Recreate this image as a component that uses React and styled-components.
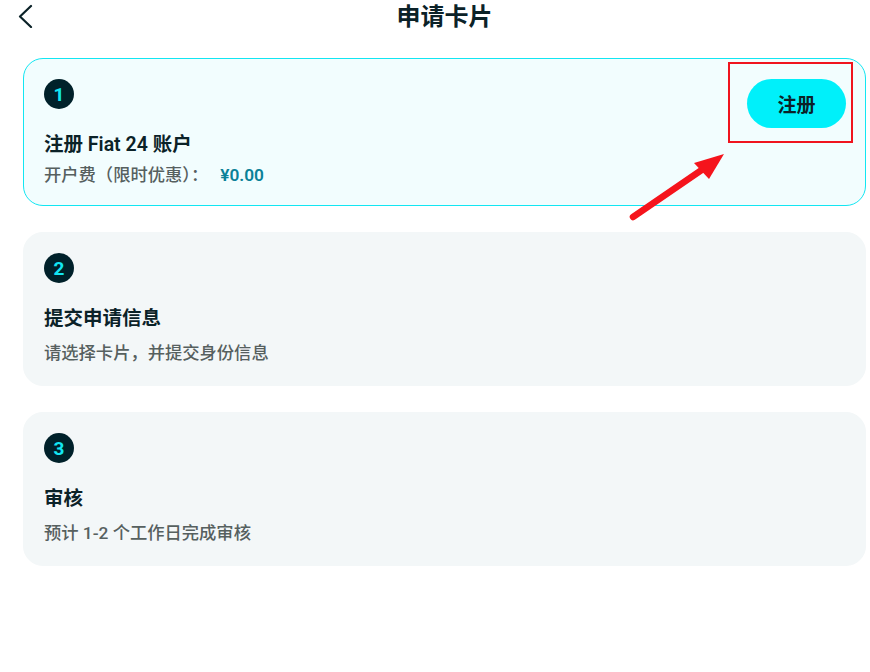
import React from "react";
import styled, { createGlobalStyle } from "styled-components";

const GlobalStyle = createGlobalStyle`
  body {
    margin: 0;
    background: #ffffff;
    font-family: "Roboto", "Noto Sans CJK SC", "Noto Sans", sans-serif;
    color: #0b2228;
  }
`;

const Page = styled.div`
  padding: 0 4px 0 23px;
  position: relative;
`;

const Header = styled.div`
  height: 34px;
  display: flex;
  align-items: center;
  justify-content: center;
  position: relative;
`;

const BackButton = styled.button`
  position: absolute;
  left: -6px;
  top: 4px;
  border: 0;
  background: none;
  padding: 0;
  width: 16px;
  height: 24px;
  display: flex;
`;

const Title = styled.h1`
  margin: 0;
  font-size: 24px;
  font-weight: 600;
  line-height: 34px;
  color: #0b2228;
`;

const Steps = styled.div`
  margin-top: 24px;
  display: flex;
  flex-direction: column;
  gap: 26px;
`;

const Card = styled.div`
  display: flex;
  justify-content: space-between;
  align-items: flex-start;
  padding: 20px 19px ${({ $active }) => ($active ? "18px" : "20px")} 20px;
  border-radius: 20px;
  border: 1px solid ${({ $active }) => ($active ? "#12e6f2" : "#f3f7f8")};
  background: ${({ $active }) => ($active ? "#f2fdfe" : "#f3f7f8")};
`;

const Body = styled.div`
  display: flex;
  flex-direction: column;
`;

const StepNumber = styled.div`
  width: 30px;
  height: 30px;
  border-radius: 50%;
  background: #00212a;
  color: #13e6f2;
  font-family: "Roboto", "Noto Sans", sans-serif;
  font-weight: 700;
  font-size: 19px;
  display: flex;
  align-items: center;
  justify-content: center;
`;

const StepTitle = styled.div`
  margin-top: 24px;
  font-size: 19.5px;
  font-weight: 600;
  line-height: 24px;
  color: #0b2228;
`;

const StepDesc = styled.div`
  margin-top: ${({ $tight }) => ($tight ? "6px" : "10px")};
  font-size: 17.3px;
  font-weight: 500;
  line-height: 24px;
  color: #56605f;
`;

const Price = styled.span`
  color: #0a8198;
  font-weight: 600;
  margin-left: 12px;
`;

const ButtonWrap = styled.div`
  position: relative;
`;

const RegisterButton = styled.button`
  width: 99px;
  height: 49px;
  border: 0;
  border-radius: 25px;
  background: #00f0fa;
  color: #0b2228;
  font-family: "Noto Sans CJK SC", sans-serif;
  font-size: 19px;
  font-weight: 700;
`;

const Highlight = styled.div`
  position: absolute;
  left: -19px;
  top: -17px;
  width: 125px;
  height: 81px;
  box-sizing: border-box;
  border: 2px solid #f0141e;
  pointer-events: none;
`;

const Arrow = styled.svg`
  position: absolute;
  left: 620px;
  top: 145px;
  pointer-events: none;
`;

const steps = [
  { n: 1, title: "注册 Fiat 24 账户", active: true },
  { n: 2, title: "提交申请信息", desc: "请选择卡片，并提交身份信息" },
  { n: 3, title: "审核", desc: "预计 1-2 个工作日完成审核" },
];

export default function App() {
  return (
    <>
      <GlobalStyle />
      <Page>
        <Header>
          <BackButton aria-label="back">
            <svg width="16" height="24" viewBox="0 0 16 24" fill="none">
              <path d="M14 2L3 12.5L14 23" stroke="#0b2228" strokeWidth="2.2" strokeLinecap="round" strokeLinejoin="round" />
            </svg>
          </BackButton>
          <Title>申请卡片</Title>
        </Header>
        <Steps>
          {steps.map((s) => (
            <Card key={s.n} $active={s.active}>
              <Body>
                <StepNumber>{s.n}</StepNumber>
                <StepTitle>{s.title}</StepTitle>
                {s.active ? (
                  <StepDesc $tight>
                    开户费（限时优惠）：<Price>¥0.00</Price>
                  </StepDesc>
                ) : (
                  <StepDesc>{s.desc}</StepDesc>
                )}
              </Body>
              {s.active && (
                <ButtonWrap>
                  <RegisterButton>注册</RegisterButton>
                  <Highlight />
                </ButtonWrap>
              )}
            </Card>
          ))}
        </Steps>
        <Arrow width="115" height="85" viewBox="0 0 115 85">
          <line x1="13" y1="72" x2="86" y2="22" stroke="#f5141c" strokeWidth="6.5" strokeLinecap="round" />
          <polygon points="104,9 74,18 89,34" fill="#f5141c" />
        </Arrow>
      </Page>
    </>
  );
}
